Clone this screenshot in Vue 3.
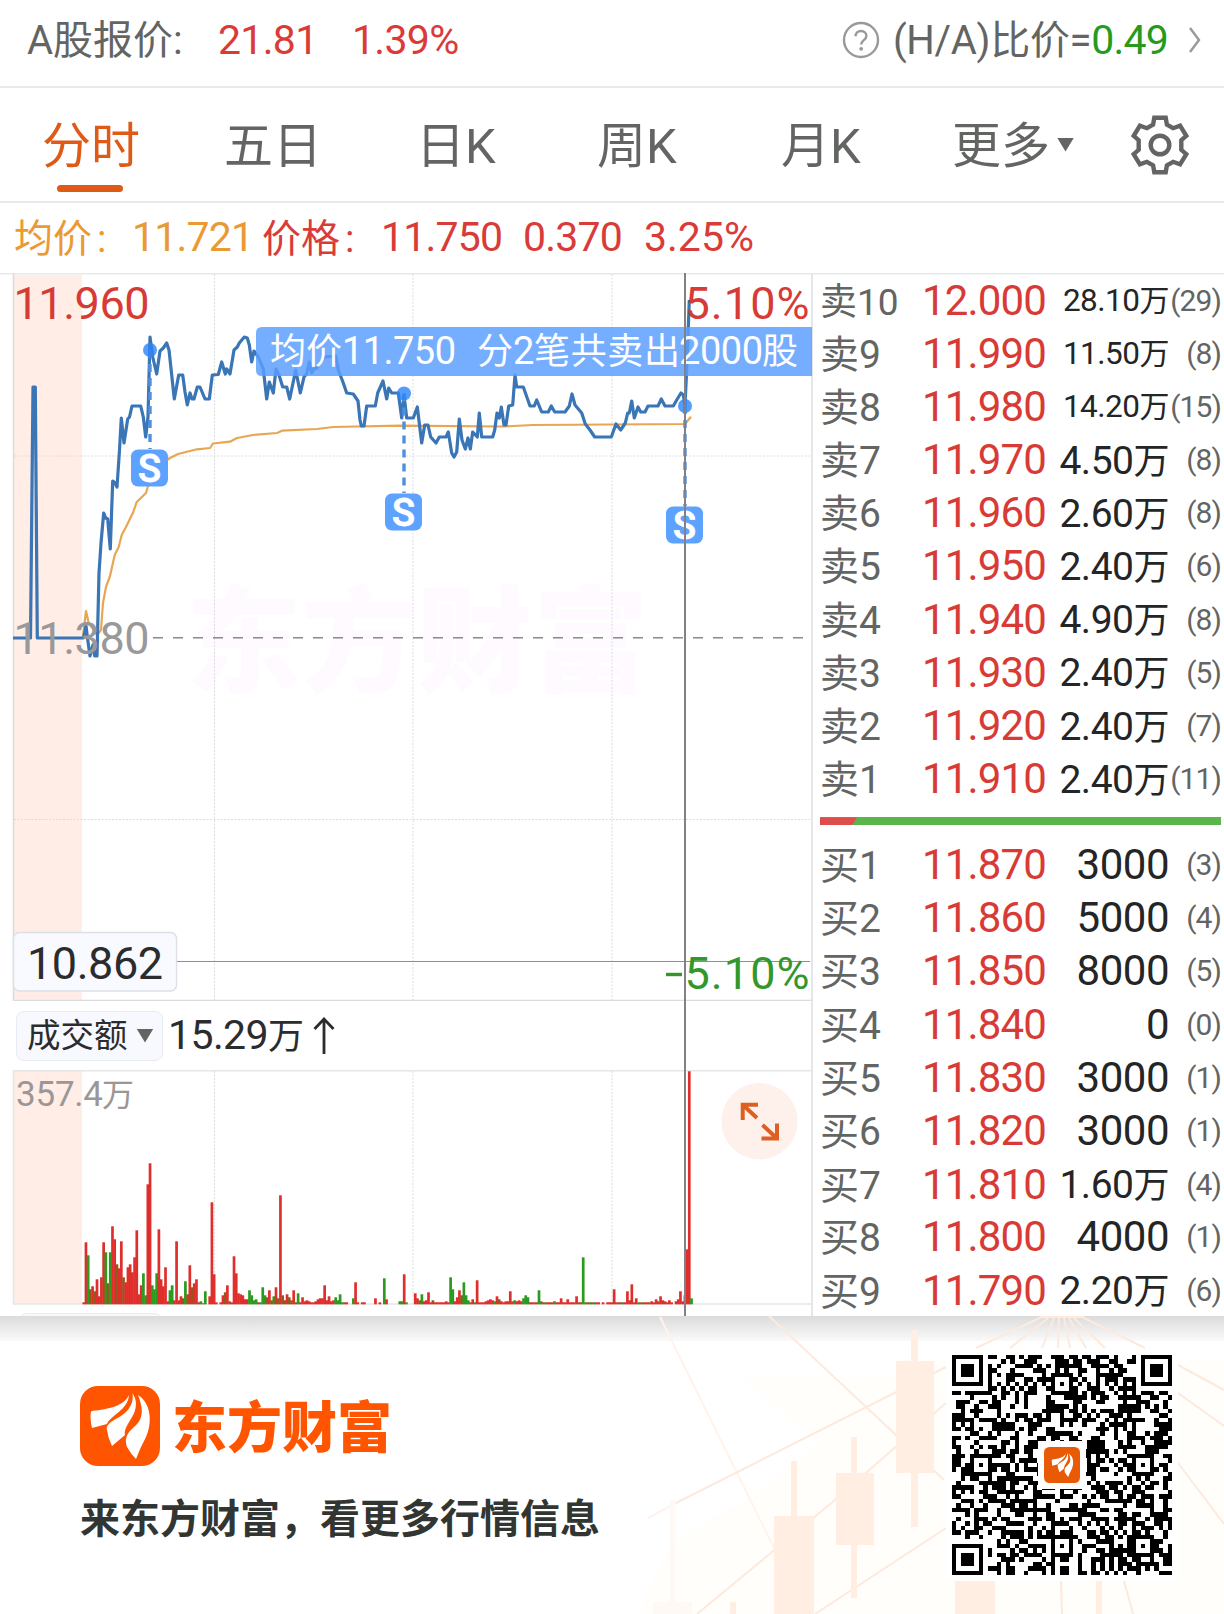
<template>
  <div class="quote-page">
    <!-- A股报价 -->
    <header class="quote-bar">
      <span class="quote-label">A股报价:</span>
      <span class="quote-num price">21.81</span>
      <span class="quote-num">1.39%</span>
      <div class="ratio">
        <svg class="help-icon" viewBox="0 0 38 38">
          <circle cx="19" cy="19" r="17" />
          <path d="M13.6 15.2c0-3.2 2.3-5.2 5.4-5.2s5.4 2 5.4 4.9c0 4.2-5.2 4.3-5.2 8.6" />
          <circle class="help-dot" cx="19.2" cy="27.8" r="1.9" />
        </svg>
        <span class="ratio-label">(H/A)比价=</span>
        <span class="ratio-value">0.49</span>
        <svg class="chevron" viewBox="0 0 14 28"><path d="M2 2l9 12-9 12" /></svg>
      </div>
    </header>

    <!-- 周期切换 -->
    <nav class="tabs">
      <span v-for="tab in tabs" :key="tab" class="tab" :class="{ active: tab === activeTab }">{{ tab }}</span>
      <span class="tab more">更多<i class="triangle"></i></span>
      <svg class="gear" viewBox="0 0 60 60">
        <path d="M24.3 2.8h11.4l1.2 6.8 6.2 3.6 7-2.6 6.2 10.2-5 4.4v9.6l5 4.4-6.2 10.2-7-2.6-6.2 3.6-1.2 6.8H24.3l-1.2-6.8-6.2-3.6-7 2.6-6.2-10.2 5-4.4v-9.6l-5-4.4 6.2-10.2 7 2.6 6.2-3.6z" />
        <circle cx="30" cy="30" r="9.3" />
      </svg>
    </nav>

    <div class="legend">
      <span class="avg-name">均价<b>:</b></span>
      <span class="avg-value">11.721</span>
      <span class="price-name">价格<b>:</b></span>
      <span class="price-value">11.750</span>
      <span class="price-diff">0.370</span>
      <span class="price-rate">3.25%</span>
    </div>

    <main class="content">
      <section class="chart-column">
        <!-- 分时图 -->
        <svg class="price-chart" viewBox="0 273 813 728">
          <rect class="pre-market" x="14" y="275" width="68" height="725" />
          <text class="watermark" x="186" y="683" textLength="462">东方财富</text>
          <path class="grid" d="M214.5 274V1000M413 274V1000M612 274V1000M14 456H810M14 819.5H810" />
          <path class="frame" d="M13.5 273V1001M13 1000.5H812" />
          <path class="base-line" d="M153 637.8H808" />
          <path class="cross" d="M177 961.5H810" />
          <polyline class="avg-line" :points="avgPoints" />
          <polyline class="price-line" :points="pricePoints" />
          <g v-for="m in markers" :key="m.x">
            <path class="marker-stem" :d="`M${m.x} ${m.y}V${m.box - 19}`" />
            <circle class="marker-dot" :cx="m.x" :cy="m.y" r="7" />
            <rect class="marker-box" :x="m.x - 19" :y="m.box - 18.5" width="37" height="37" rx="7" />
            <text class="marker-text" :x="m.x - 0.6" :y="m.box + 13.5">S</text>
          </g>
          <path class="tip-bg" d="M812 327H262q-6 0-6 6v37q0 6 6 6H812z" />
          <text class="tip-cjk" x="270" y="364">均价</text>
          <text class="tip-num" x="342" y="364" textLength="114">11.750</text>
          <text class="tip-cjk" x="477" y="364">分</text>
          <text class="tip-num" x="513" y="364">2</text>
          <text class="tip-cjk" x="534" y="364" textLength="146">笔共卖出</text>
          <text class="tip-num" x="679" y="364" textLength="84">2000</text>
          <text class="tip-cjk" x="762" y="364">股</text>
          <text class="axis up" x="13.5" y="319" textLength="136">11.960</text>
          <text class="axis up" x="684.5" y="319" textLength="125">5.10%</text>
          <text class="axis base" x="13.5" y="654" textLength="136">11.380</text>
          <text class="axis down" x="684.5" y="988.5" textLength="125">5.10%</text>
          <path class="minus" d="M666 974.500H682" />
          <rect class="price-tag" x="13.500" y="932.500" width="163" height="58.500" rx="6" />
          <text class="axis tag" x="27" y="979" textLength="136">10.862</text>
        </svg>

        <div class="indicator">
          <span class="indicator-name"><em>成交额</em><i class="triangle"></i></span>
          <span class="indicator-value">15.29<em>万</em></span>
          <svg class="arrow-up" viewBox="0 0 22 38"><path d="M11 37V2M1.500 12L11 2l9.500 10" /></svg>
        </div>

        <!-- 成交额柱状图 -->
        <svg class="volume-chart" viewBox="0 1070 813 246">
          <rect class="pre-market" x="14" y="1071" width="68" height="233" />
          <path class="grid" d="M214.500 1071V1304M413 1071V1304M612 1071V1304" />
          <path class="frame light" d="M13.500 1070V1304M13 1070.700H811M13 1304H811" />
          <rect
            v-for="bar in volumeBars"
            :key="bar.i"
            :class="bar.type"
            :x="bar.x"
            :y="1304.3 - bar.h"
            width="2.7"
            :height="bar.h"
          />
          <text class="vol-max" x="16" y="1106" textLength="87">357.4</text>
          <text class="vol-unit" x="102" y="1106">万</text>
          <circle class="expand-bg" cx="759.500" cy="1121.300" r="38.200" />
          <path class="expand" d="M757 1118L743 1105M742.700 1120V1104.700H758M762.500 1125L776.500 1138M777 1123.500V1138.500H761.500" />
          <rect class="next-row" x="19" y="1313.500" width="144" height="20" rx="8" />
        </svg>
        <i class="cross-v"></i>
      </section>

      <!-- 买卖盘口 -->
      <section class="order-book">
        <div v-for="row in sells" :key="row[0]" class="row">
          <span class="level" :class="{ long: row[0].length > 2 }">{{ row[0] }}</span>
          <span class="row-price">{{ row[1] }}</span>
          <span class="amount" :class="amountClass(row[2])">{{ row[2].replace('万', '') }}<em v-if="row[2].includes('万')">万</em></span>
          <span class="count">({{ row[3] }})</span>
        </div>
        <div class="ratio-bar"><i></i></div>
        <div v-for="row in buys" :key="row[0]" class="row">
          <span class="level">{{ row[0] }}</span>
          <span class="row-price">{{ row[1] }}</span>
          <span class="amount" :class="amountClass(row[2])">{{ row[2].replace('万', '') }}<em v-if="row[2].includes('万')">万</em></span>
          <span class="count">({{ row[3] }})</span>
        </div>
      </section>
    </main>

    <!-- 底部品牌 -->
    <footer class="brand">
      <svg class="brand-bg" viewBox="600 1316 624 298">
        <path class="glow" d="M740 1378h160v-20h324V1614H640q20-80 100-110l80-60z" />
        <path class="lines faint" d="M660 1317L774 1548M648 1518L676 1503M672 1500V1614" />
        <path class="lines" d="M769 1316L944 1480M676 1503L946 1367M697 1614L835 1500L946 1403M815 1614L946 1528M1178 1365L1224 1390M1178 1393L1224 1426M1178 1463L1224 1524" />
        <path class="lines" d="M1044 1316L976 1348M1048 1318L1010 1348M1054 1318L1042 1348M1059 1318L1058 1348M1064 1318L1070 1348M1069 1318L1086 1348M1074 1318L1105 1348M1080 1316L1145 1348M1040 1317H1084M1061 1581L1062 1614M1124 1581L1133 1614" />
        <path class="candles" d="M774 1516h17v-55h6v55h17v98H774zM836 1473h15v-36h6v36h17v72h-17v53h-6v-53h-15zM896 1361h15v-31h7v31h16v112h-16v54h-7v-54h-15zM955 1578h40v36h-40zM730 1602h6v12h-6zM1096 1578h6v36h-6z" />
        <path class="candles faint" d="M653 1602h17v-102h5v102h17v12h-39z" />
      </svg>
      <div class="brand-info">
        <div class="brand-title">
          <svg class="logo" viewBox="0 0 80 80">
            <rect width="80" height="80" rx="18" />
            <path v-for="d in feathers" :key="d" :d="d" />
          </svg>
          <span class="brand-name">东方财富</span>
        </div>
        <p class="slogan">来东方财富，看更多行情信息</p>
      </div>
      <div class="qr">
        <svg class="qr-code" viewBox="0 0 49 49" shape-rendering="crispEdges"><path :d="qrPath" /></svg>
        <div class="qr-logo">
          <svg class="logo small" viewBox="0 0 80 80">
            <rect width="80" height="80" rx="12" />
            <g transform="translate(9 8) scale(.8)"><path v-for="d in feathers" :key="d" :d="d" /></g>
          </svg>
        </div>
      </div>
    </footer>
  </div>
</template>

<script setup>
import { ref } from 'vue'

const tabs = ['分时', '五日', '日K', '周K', '月K']
const activeTab = ref('分时')

const sells = [
  ['卖10', '12.000', '28.10万', 29],
  ['卖9', '11.990', '11.50万', 8],
  ['卖8', '11.980', '14.20万', 15],
  ['卖7', '11.970', '4.50万', 8],
  ['卖6', '11.960', '2.60万', 8],
  ['卖5', '11.950', '2.40万', 6],
  ['卖4', '11.940', '4.90万', 8],
  ['卖3', '11.930', '2.40万', 5],
  ['卖2', '11.920', '2.40万', 7],
  ['卖1', '11.910', '2.40万', 11]
]

const buys = [
  ['买1', '11.870', '3000', 3],
  ['买2', '11.860', '5000', 4],
  ['买3', '11.850', '8000', 5],
  ['买4', '11.840', '0', 0],
  ['买5', '11.830', '3000', 1],
  ['买6', '11.820', '3000', 1],
  ['买7', '11.810', '1.60万', 4],
  ['买8', '11.800', '4000', 1],
  ['买9', '11.790', '2.20万', 6]
]

// 数字越长字号越小
const amountClass = (text) => {
  if (text.length > 5) return 'small'
  return text.includes('万') ? 'medium' : ''
}

const markers = [
  { x: 150, y: 350, box: 468 },
  { x: 404, y: 393.5, box: 512 },
  { x: 685, y: 406, box: 525 }
]

const pricePoints =
  '13,638 30.5,638 33,387 35.3,387 37.3,638 83.5,638 86,626 87.5,638 90,656 93,645 94.7,656 97,656 99,573 101,543 ' +
  '103.7,513 105.7,518 107.7,519 110.3,549 112.7,481 115,483 117,487 119.5,450 121.3,418 124,443 127.7,419 129.5,417 ' +
  '132,406 140.7,406 143.3,417 145.7,437 148,417 150,337 152.7,357 156.7,374 160,351 163.3,348 166.7,343 169,350 ' +
  '174.3,399 178.7,375 182.7,375 185,392 187.3,405 190,393 192,399 194,399 197.3,387 200,387 205,399 209.3,399 ' +
  '212.3,375 218.3,374.5 221.7,362 225.3,374 226.7,369 230,374 234,350 237.3,347 239.3,343 244.3,337 247.3,338 ' +
  '249.3,345 251.7,362 254,351 258.3,357 263.3,369 266.7,399 269.3,382 273.3,393 276,369 279.3,376 282.7,387 ' +
  '286.7,387 289.7,399 295.7,370 300.3,393 304,377 306.7,374 309.3,362 311.7,373 314,369 316.7,368 320,363 325,357 ' +
  '335.7,356 338.3,370 343.3,383 346.7,393 353.3,394 358,401 360,420 361.3,426 364,426 366.7,406 375.3,406 ' +
  '377.7,393 383,381 386.7,399 388.7,388 391.7,393 398.3,393 401.7,418 404,395 406.7,418 413.3,418 417.3,407 ' +
  '421.7,443 424.7,425 428,425 430.7,437 436,443 439.3,437 446,437 448.3,432 451.7,453 454,457 456.7,452 459.3,419 ' +
  '462,440 465.3,449 468,438 470.3,449 472.7,432 477.3,437 479.3,413 481.7,437 492.7,437 494.7,430 497,413 ' +
  '499.3,418 501.3,407 504,425 506,425 508.7,406 512.7,405 515,375 516.7,387 523.3,387 530,406 534.3,406 536.7,400 ' +
  '541.7,412 548.3,412 551.3,406 554.7,412 565,412 569.3,406 572,394 575,405 581.7,413 585.3,424 590,430 594.7,437 ' +
  '611.3,437 616,424 620.7,430 625.3,423 627.7,413 629.3,413 631.7,401 634.3,418 638,407 640.7,412 645,412 648,406 ' +
  '658,406 661.3,399 665,406 673.3,406 676.7,400 681,393 683.3,395 685,405 687,363 689.3,300'

const avgPoints =
  '83,636 86,611 88.7,623 93,629 97,635 101,630 103,603 106,587 110,576 114.7,555 118.7,547 121.7,535 126,527 ' +
  '133.3,512 136.7,502 146,493 148.3,485 151.7,473 160,465 170,458 178,454 197,449.3 210,448 213,443.5 230,441.7 ' +
  '237,438 253,435 277,433 282,430.7 317,429 333,427 400,425.7 503,426.5 533,425 685,424 691,416.7'

// 每分钟成交额: 序号 + 涨跌(r/g/m) + 柱高
const volumes =
  '0r2 1r62 2g49 3m15 4r18 5m13 6r25 7r8 8r27 9r62 10g52 11m21 12g52 13r78 14r65 15m40 16r36 17r63 18m27 19r22 20r37 ' +
  '21r40 22r32 23r47 24r74 25r10 26r19 27g31 28g9 29r120 30r141 31g19 32g15 33g31 34r75 35r25 36r18 37r37 38r3 39g14 ' +
  '40g19 41r4 42r63 43r4 44r8 45m6 46g23 47m10 48r39 49m17 50r21 51r25 52r2 53g3 54r1 55g13 57r8 58r102 59r30 60r2 ' +
  '62r2 63r9 64m12 65r19 66m3 67r2 68r48 69r31 70r11 71r10 72r9 73r5 74r5 75g14 76g9 77g4 78g5 79r2 80g2 81g17 82g9 ' +
  '83m7 84r14 85m4 86g8 87r17 88m6 89r109 90m9 91m4 92r10 93m7 94m4 95r14 96m2 97g11 98r2 99r7 100r3 101r4 102r3 ' +
  '103r2 104r2 105r3 106r5 107r6 108r6 109r19 110r4 111r8 112r3 113r4 114g7 115g4 116g10 117g2 118r2 119r2 122g6 ' +
  '123r22 124r2 126r2 127r2 132r6 134r2 136g26 137r5 143g3 144g3 145r30 146g2 150r11 151r6 152m4 153g10 154r3 155r4 ' +
  '156r12 157r2 158m4 159r2 160r2 161r2 162r2 163r2 164r3 165r2 166g27 167g15 168r3 169r7 170r14 171m9 172g22 173g9 ' +
  '174g4 175r2 176r5 177g2 178r24 179r2 180r2 181r2 182r3 183r4 184r5 185r4 186g3 187r8 188m5 189r3 190r2 191r3 ' +
  '192r3 193r13 194r3 195g4 196r3 197r4 198r3 199g6 200g9 201g7 202r2 203r2 204r2 205r2 206g14 207g3 208r2 209g2 ' +
  '210r2 211r2 212r2 213g3 214r2 215r2 216r6 217r2 218r2 219r5 220r2 221r2 222r2 223r8 224m2 225r2 226g47 227g2 ' +
  '228r2 229g2 230m2 231g2 232r2 233r2 235r2 237r2 238r2 239r2 240r15 241r2 242m2 243r2 244g2 245r2 246r13 247r4 ' +
  '248r20 249r2 250r6 251g2 252r2 253g2 254r2 255r2 256m2 257r3 258r2 259r5 260r3 261r8 262r4 263r3 264r2 265r4 ' +
  '266r2 268r3 269r5 270r13 271r3 272g9 273r55 274r233 275g6'

const volumeBars = volumes.split(' ').map((item) => {
  const [, i, type, h] = item.match(/^(\d+)([rgm])(\d+)$/)
  return { i, type, h: Number(h), x: 82.4 + Number(i) * 2.21 }
})

const feathers = [
  'M49 9C44 20 29 23 12 25C10 25 10 33 12 42L27 38C31 29 48 24 49 9Z',
  'M52.5 7C55 22 42 30 34 34C27 38 26 42 27 44Q28 52 32 60L45 49C43 38 60 29 55 12Z',
  'M58 9C66 29 60 36 53 42C45 49 45 55 47 61Q51 68 56 73Q60 62 66 51C72 38 72 18 58 9Z'
]

// 二维码点阵
const SIZE = 49
const buildQr = () => {
  let seed = 20241
  const random = () => {
    seed = (seed * 1103515245 + 12345) % 2147483648
    return seed / 2147483648
  }
  const grid = Array.from({ length: SIZE }, () => Array.from({ length: SIZE }, () => random() < 0.52))
  const ring = (cx, cy, dark, radius) => {
    for (let y = cy - radius; y <= cy + radius; y++) {
      for (let x = cx - radius; x <= cx + radius; x++) {
        if (x < 0 || y < 0 || x >= SIZE || y >= SIZE) continue
        grid[y][x] = dark.includes(Math.max(Math.abs(x - cx), Math.abs(y - cy)))
      }
    }
  }
  for (let i = 8; i < SIZE - 8; i++) {
    grid[6][i] = i % 2 === 0
    grid[i][6] = i % 2 === 0
  }
  ;[[3, 3], [45, 3], [3, 45]].forEach(([x, y]) => ring(x, y, [0, 1, 3], 4))
  ;[[24, 6], [6, 24], [42, 24], [24, 42], [42, 42]].forEach(([x, y]) => ring(x, y, [0, 2], 2))
  let d = ''
  grid.forEach((line, y) => {
    line.forEach((dark, x) => {
      if (dark) d += `M${x} ${y}h1v1h-1z`
    })
  })
  return d
}
const qrPath = buildQr()
</script>

<style>
body {
  background: #fff;
}
</style>

<style scoped>
.quote-page {
  width: 1224px;
  height: 1614px;
  overflow: hidden;
  background: #fff;
  color: #636563;
  font-family: Roboto, 'Noto Sans CJK SC', sans-serif;
  display: flex;
  flex-direction: column;
}

em,
i,
b {
  font-style: normal;
  font-weight: 400;
}

svg {
  display: block;
  flex: none;
}

/* 顶部报价 */
.quote-bar {
  box-sizing: border-box;
  height: 88px;
  flex: none;
  padding: 0 22px 7px 27px;
  display: flex;
  align-items: center;
  font-size: 40px;
  white-space: nowrap;
  border-bottom: 2px solid #e6eaec;
}

.quote-label {
  width: 191px;
  padding-bottom: 5px;
}

.quote-num {
  color: #d93c38;
  font-size: 41px;
  letter-spacing: -0.7px;
}

.quote-num.price {
  width: 134px;
}

.ratio {
  margin-left: auto;
  display: flex;
  align-items: center;
}

.help-icon {
  width: 38px;
  height: 38px;
  margin-right: 13px;
  fill: none;
  stroke: #999;
  stroke-width: 2.4;
}

.help-dot {
  fill: #999;
  stroke: none;
}

.ratio-label {
  padding-bottom: 5px;
  letter-spacing: -0.3px;
}

.ratio-value {
  color: #279a1c;
  font-size: 41px;
  letter-spacing: -0.8px;
}

.chevron {
  width: 14px;
  height: 28px;
  margin-left: 20px;
  fill: none;
  stroke: #999;
  stroke-width: 2.4;
}

/* 周期 */
.tabs {
  box-sizing: border-box;
  height: 115px;
  flex: none;
  padding: 0 0 0 42px;
  display: grid;
  grid-template-columns: 182px 192px 181px 184px 171px 178px 60px;
  align-items: center;
  font-size: 49px;
  border-bottom: 2px solid #e6eaec;
}

.tab {
  position: relative;
  padding-top: 5px;
  line-height: 108px;
  white-space: nowrap;
}

.tab.active {
  color: #df5a17;
}

.tab.active::after {
  content: '';
  position: absolute;
  left: 15px;
  bottom: 9px;
  width: 66px;
  height: 7px;
  border-radius: 4px;
  background: #df5a17;
}

.tab.more {
  display: flex;
  align-items: center;
}

.triangle {
  width: 17px;
  height: 14px;
  margin-left: 7px;
  background: #636563;
  clip-path: polygon(0 0, 100% 0, 50% 100%);
}

.tab .triangle {
  margin-bottom: 5px;
}

.gear {
  width: 60px;
  height: 60px;
  fill: none;
  stroke: #636563;
  stroke-width: 4.4;
}

/* 均价价格 */
.legend {
  box-sizing: border-box;
  height: 70px;
  flex: none;
  padding: 0 0 2px 14px;
  display: flex;
  align-items: center;
  font-size: 41px;
  letter-spacing: -0.8px;
  white-space: nowrap;
  color: #d93c38;
}

.avg-name,
.price-name {
  padding-bottom: 5px;
  font-size: 39px;
  letter-spacing: 0;
}

.legend b {
  margin-left: 5px;
}

.avg-name {
  width: 118px;
}

.avg-name,
.avg-value {
  color: #ea9a35;
}

.avg-value {
  width: 130px;
}

.price-name {
  width: 119px;
}

.price-value {
  width: 142px;
}

.price-diff {
  width: 121px;
}

.price-rate {
  letter-spacing: 0;
}

/* 主体 */
.content {
  height: 1043px;
  flex: none;
  display: flex;
  box-shadow: inset 0 1.5px #e6e9ed;
}

.chart-column {
  position: relative;
  box-sizing: border-box;
  width: 813px;
  border-right: 2px solid #e4e6ea;
}

.price-chart {
  width: 813px;
  height: 728px;
}

.pre-market {
  fill: #ffede6;
}

.watermark {
  font: 900 115px 'Noto Sans CJK SC', sans-serif;
  fill: #fefaff;
}

.grid {
  fill: none;
  stroke: #dcdcdf;
  stroke-width: 1;
  stroke-dasharray: 2 1.5;
}

.frame {
  fill: none;
  stroke: #dcdcde;
  stroke-width: 1.6;
}

.frame.light {
  stroke: #e6e6e8;
}

.base-line {
  stroke: #8a8a8a;
  stroke-width: 1.6;
  stroke-dasharray: 10 10;
}

.cross {
  stroke: #8e8e90;
  stroke-width: 1.2;
}

.avg-line {
  fill: none;
  stroke: #e8a653;
  stroke-width: 2.2;
  stroke-linejoin: round;
}

.price-line {
  fill: none;
  stroke: #3a75b5;
  stroke-width: 3.2;
  stroke-linejoin: round;
}

.marker-stem {
  stroke: #4f8fe0;
  stroke-width: 3.4;
  stroke-dasharray: 8 6;
}

.marker-dot {
  fill: #2b82f8;
  opacity: 0.8;
}

.marker-box {
  fill: #5ea2ff;
}

.marker-text {
  font: 500 38px Roboto, sans-serif;
  fill: #fff;
  stroke: #fff;
  stroke-width: 0.8;
  text-anchor: middle;
}

.tip-bg {
  fill: #5b9dff;
  opacity: 0.84;
}

.tip-cjk {
  font: 36px 'Noto Sans CJK SC', sans-serif;
  fill: #fff;
}

.tip-num {
  font: 38px Roboto, sans-serif;
  fill: #fff;
}

.axis {
  font: 45px Roboto, sans-serif;
}

.axis.up {
  fill: #d63b36;
}

.axis.base {
  fill: #999;
}

.axis.down {
  fill: #33972b;
}

.axis.tag {
  fill: #2b2c2e;
}

.minus {
  stroke: #33972b;
  stroke-width: 3.4;
}

.price-tag {
  fill: #f8faff;
  stroke: #dcdfe6;
  stroke-width: 1.4;
}

/* 指标行 */
.indicator {
  height: 69px;
  padding-left: 16px;
  display: flex;
  align-items: center;
  color: #2b2c2e;
}

.indicator-name {
  box-sizing: border-box;
  width: 147px;
  height: 50px;
  padding-left: 10px;
  display: flex;
  align-items: center;
  border: 1px solid #e8ebf2;
  border-radius: 8px;
  background: #f7f9fe;
  font-size: 33.5px;
  white-space: nowrap;
}

.indicator-name em {
  padding-bottom: 6px;
}

.indicator-name .triangle {
  margin-left: 9px;
}

.indicator-value {
  margin-left: 5px;
  font-size: 41px;
  line-height: 50px;
  letter-spacing: -0.6px;
}

.indicator-value em {
  font-size: 36px;
}

.arrow-up {
  width: 22px;
  height: 38px;
  margin-left: 10px;
  fill: none;
  stroke: #2b2c2e;
  stroke-width: 2.8;
}

.volume-chart {
  width: 813px;
  height: 246px;
}

.r {
  fill: #df2f2c;
}

.g {
  fill: #2b9a1f;
}

.m {
  fill: #94581a;
}

.vol-max {
  font: 35px Roboto, sans-serif;
  fill: #9b9797;
}

.vol-unit {
  font: 32px 'Noto Sans CJK SC', sans-serif;
  fill: #9b9797;
}

.expand-bg {
  fill: #fef1ec;
}

.expand {
  fill: none;
  stroke: #dd6022;
  stroke-width: 4;
}

.next-row {
  fill: #f7f9fe;
  stroke: #e8ebf2;
}

.cross-v {
  position: absolute;
  top: 0;
  left: 684px;
  width: 1.5px;
  height: 1043px;
  background: #857f86;
}

/* 盘口 */
.order-book {
  width: 411px;
}

.row {
  height: 53.2px;
  padding: 0 3px 0 7px;
  display: grid;
  grid-template-columns: 102px 126px 1fr 52px;
  align-items: center;
  line-height: 53px;
  white-space: nowrap;
}

.level {
  padding-top: 4px;
  font-size: 39px;
  line-height: 49px;
}

.level.long {
  font-size: 37px;
}

.row-price {
  color: #d83a36;
  font-size: 42px;
  letter-spacing: -0.85px;
}

.amount {
  justify-self: end;
  color: #242526;
  font-size: 42px;
  letter-spacing: -0.5px;
}

.amount.medium {
  padding-top: 3px;
  font-size: 39px;
  line-height: 50px;
}

.amount.medium em {
  font-size: 36px;
}

.amount.small {
  font-size: 31.5px;
  padding-top: 1px;
}

.amount.small em {
  font-size: 30px;
}

.count {
  justify-self: end;
  font-size: 30px;
  letter-spacing: -0.9px;
}

.ratio-bar {
  height: 8px;
  margin: 12.5px 3px 12.5px 7px;
  background: #5bb54b;
}

.ratio-bar i {
  display: block;
  width: 37px;
  height: 8px;
  background: #dc4d4b;
  clip-path: polygon(0 0, 100% 0, 86% 100%, 0 100%);
}

/* 底部 */
.brand {
  position: relative;
  height: 298px;
  flex: none;
  padding: 0 46px 0 80px;
  display: flex;
  justify-content: space-between;
  background: #fff;
}

.brand::before {
  content: '';
  position: absolute;
  left: 0;
  top: 0;
  width: 100%;
  height: 25px;
  background: linear-gradient(rgba(0, 0, 0, 0.14), rgba(0, 0, 0, 0.02));
}

.brand-bg {
  position: absolute;
  right: 0;
  top: 0;
  width: 624px;
  height: 298px;
}

.glow {
  fill: #fffefb;
}

.lines {
  fill: none;
  stroke: #fdeadd;
  stroke-width: 2;
}

.candles {
  fill: #ffeee1;
}

.lines.faint {
  stroke: #fff3ec;
}

.candles.faint {
  fill: #fff9f5;
}

.brand-info {
  position: relative;
  padding-top: 70px;
}

.brand-title {
  display: flex;
  align-items: center;
}

.logo {
  width: 80px;
  height: 80px;
  fill: #fff;
}

.logo rect {
  fill: #ff5500;
}

.brand-name {
  padding-top: 4px;
  margin-left: 12px;
  color: #ff5500;
  font-size: 55px;
  font-weight: 900;
  line-height: 76px;
}

.slogan {
  margin: 20px 0 0;
  color: #323633;
  font-family: 'Noto Sans CJK SC', sans-serif;
  font-size: 40px;
  font-weight: 700;
  line-height: 60px;
}

.qr {
  position: relative;
  width: 220px;
  height: 220px;
  margin-top: 33px;
  padding: 6px;
  background: #fff;
}

.qr-code {
  width: 220px;
  height: 220px;
}

.qr-logo {
  position: absolute;
  left: 92px;
  top: 92px;
  padding: 6px;
  background: #fff;
}

.logo.small {
  width: 36px;
  height: 36px;
}

.logo.small rect {
  fill: #e85a05;
}
</style>
